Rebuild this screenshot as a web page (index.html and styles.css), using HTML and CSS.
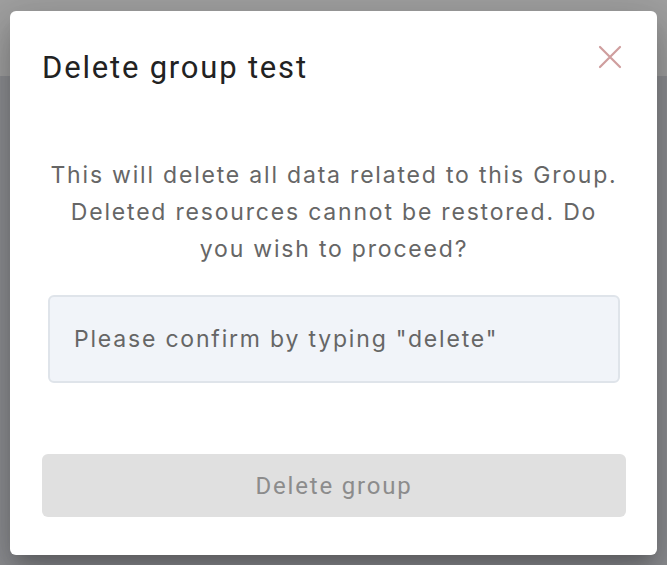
FILE: index.html
```html
<!DOCTYPE html>
<html lang="en">
<head>
<meta charset="utf-8">
<title>Delete group</title>
<link rel="stylesheet" href="styles.css">
</head>
<body>
<div class="backdrop">
  <div class="dialog" role="dialog" aria-labelledby="dlg-title">
    <div class="dialog-header">
      <h2 id="dlg-title" class="dialog-title">Delete group test</h2>
      <button class="close-btn" aria-label="Close">
        <svg width="24" height="24" viewBox="0 0 24 24" aria-hidden="true">
          <path d="M2 2 L22 22 M22 2 L2 22" stroke="currentColor" stroke-width="2.2" stroke-linecap="round" fill="none"/>
        </svg>
      </button>
    </div>
    <p class="dialog-text">This will delete all data related to this Group. Deleted resources cannot be restored. Do you wish to proceed?</p>
    <input class="confirm-input" type="text" placeholder="Please confirm by typing &quot;delete&quot;">
    <button class="delete-btn" disabled>Delete group</button>
  </div>
</div>
</body>
</html>
```

FILE: styles.css
```css
html, body {
  margin: 0;
  padding: 0;
}
body {
  width: 667px;
  height: 565px;
  overflow: hidden;
  background: linear-gradient(to bottom, #a0a0a0 0, #a0a0a0 76px, #8d8e92 76px, #8d8e92 100%);
  font-family: Inter, "Noto Sans", sans-serif;
}
.backdrop {
  padding: 11px 10px 0 10px;
}
.dialog {
  box-sizing: border-box;
  width: 647px;
  height: 544px;
  background: #ffffff;
  border-radius: 6px;
  padding: 39px 31px 0 32px;
  display: flex;
  flex-direction: column;
  box-shadow: 0 11px 15px -7px rgba(0,0,0,0.2), 0 24px 38px 3px rgba(0,0,0,0.14), 0 9px 46px 8px rgba(0,0,0,0.12);
}
.dialog-header {
  display: flex;
  align-items: center;
  justify-content: space-between;
}
.dialog-title {
  margin: 0;
  font-family: Roboto, "Liberation Sans", sans-serif;
  font-weight: 400;
  font-size: 31px;
  line-height: 36px;
  letter-spacing: 1.8px;
  color: #222222;
}
.close-btn {
  border: 0;
  background: transparent;
  padding: 0;
  margin: -22px 4px 0 0;
  width: 24px;
  height: 24px;
  color: #cf9e9e;
  display: flex;
}
.dialog-text {
  margin: 71px 0 0 0;
  padding: 0 8px;
  text-align: center;
  font-size: 23px;
  line-height: 37px;
  color: #666666;
  letter-spacing: 1.8px;
}
.confirm-input {
  box-sizing: border-box;
  margin: 27px 6px 0 6px;
  height: 88px;
  border: 2px solid #dfe4ea;
  border-radius: 6px;
  background: #f1f4f9;
  padding: 0 24px;
  font-family: Inter, "Noto Sans", sans-serif;
  font-size: 23px;
  letter-spacing: 1.8px;
  color: #333333;
  outline: none;
}
.confirm-input::placeholder {
  color: #666666;
  opacity: 1;
}
.delete-btn {
  margin-top: 71px;
  height: 63px;
  border: 0;
  border-radius: 6px;
  background: #e0e0e0;
  color: #8c8c8c;
  font-family: Roboto, "Liberation Sans", sans-serif;
  font-size: 24px;
  font-weight: 400;
  letter-spacing: 1.8px;
}
```
